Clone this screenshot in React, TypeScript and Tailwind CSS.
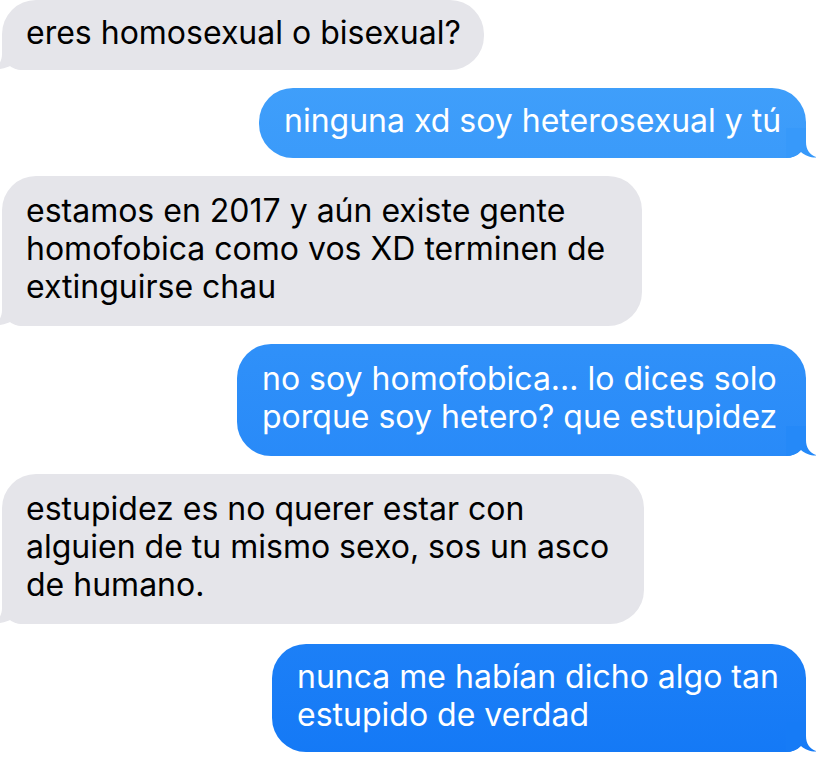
import React from "react";

type Msg = {
  side: "left" | "right";
  lines: string[];
  width: string;
  pad: string;
  tailFill?: string;
  extra?: string;
};

const msgs: Msg[] = [
  { side: "left", lines: ["eres homosexual o bisexual?"], width: "w-[482px]", pad: "pt-[14px] pb-[18px] pl-[24px]" },
  {
    side: "right",
    lines: ["ninguna xd soy heterosexual y tú"],
    width: "w-[547px]",
    pad: "pt-[14px] pb-[18px] pl-[25px]",
    tailFill: "fill-[#3799fa]",
  },
  {
    side: "left",
    lines: ["estamos en 2017 y aún existe gente", "homofobica como vos XD terminen de", "extinguirse chau"],
    width: "w-[640px]",
    pad: "pt-[16px] pb-[20px] pl-[24px]",
  },
  {
    side: "right",
    lines: ["no soy homofobica... lo dices solo", "porque soy hetero? que estupidez"],
    width: "w-[569px]",
    pad: "pt-[16px] pb-[20px] pl-[25px]",
    tailFill: "fill-[#2589f8]",
  },
  {
    side: "left",
    lines: ["estupidez es no querer estar con", "alguien de tu mismo sexo, sos un asco", "de humano."],
    width: "w-[642px]",
    pad: "pt-[16px] pb-[20px] pl-[24px]",
  },
  {
    side: "right",
    lines: ["nunca me habían dicho algo tan", "estupido de verdad"],
    width: "w-[534px]",
    pad: "pt-[14px] pb-[18px] pl-[25px]",
    tailFill: "fill-[#167bf6]",
    extra: "mt-[2px]",
  },
];

function Bubble({ m }: { m: Msg }) {
  const isRight = m.side === "right";
  return (
    <div className={`flex ${isRight ? "justify-end pr-[10px]" : "justify-start pl-[2px]"} ${m.extra ?? ""}`}>
      <div
        className={`relative ${m.width} ${m.pad} ${
          isRight
            ? "rounded-[34px] rounded-br-[20px] bg-fixed bg-linear-to-b from-[#44a3fb] to-[#1479f6] text-white"
            : "rounded-[34px] rounded-bl-[20px] bg-[#e5e5ea] text-black"
        }`}
      >
        <div className="text-[32px] leading-[38px] whitespace-nowrap">
          {m.lines.map((l, i) => (
            <div key={i}>{l}</div>
          ))}
        </div>
        {isRight ? (
          <svg
            className="absolute right-[-11px] bottom-0 w-[31px] h-[30px]"
            viewBox="0 0 31 30"
            aria-hidden="true"
          >
            <path
              d="M0,0 L20,0 L20,14 C20,22 24,27 31,29.5 C26,30.2 19,27.5 15,24 C11,28 6,30 0,30 Z"
              className={m.tailFill}
            />
          </svg>
        ) : (
          <svg
            className="absolute left-[-11px] bottom-0 w-[31px] h-[30px] scale-x-[-1]"
            viewBox="0 0 31 30"
            aria-hidden="true"
          >
            <path
              d="M0,0 L20,0 L20,14 C20,22 24,27 31,29.5 C25,30 14,28 8,24 C6,28 3,30 0,30 Z"
              fill="#e5e5ea"
            />
          </svg>
        )}
      </div>
    </div>
  );
}

export default function App() {
  return (
    <div
      className="w-[816px] h-[758px] bg-white overflow-hidden flex flex-col gap-[18px]"
      style={{ fontFamily: "Inter, 'Noto Sans', Roboto, sans-serif" }}
    >
      {msgs.map((m, i) => (
        <Bubble key={i} m={m} />
      ))}
    </div>
  );
}
